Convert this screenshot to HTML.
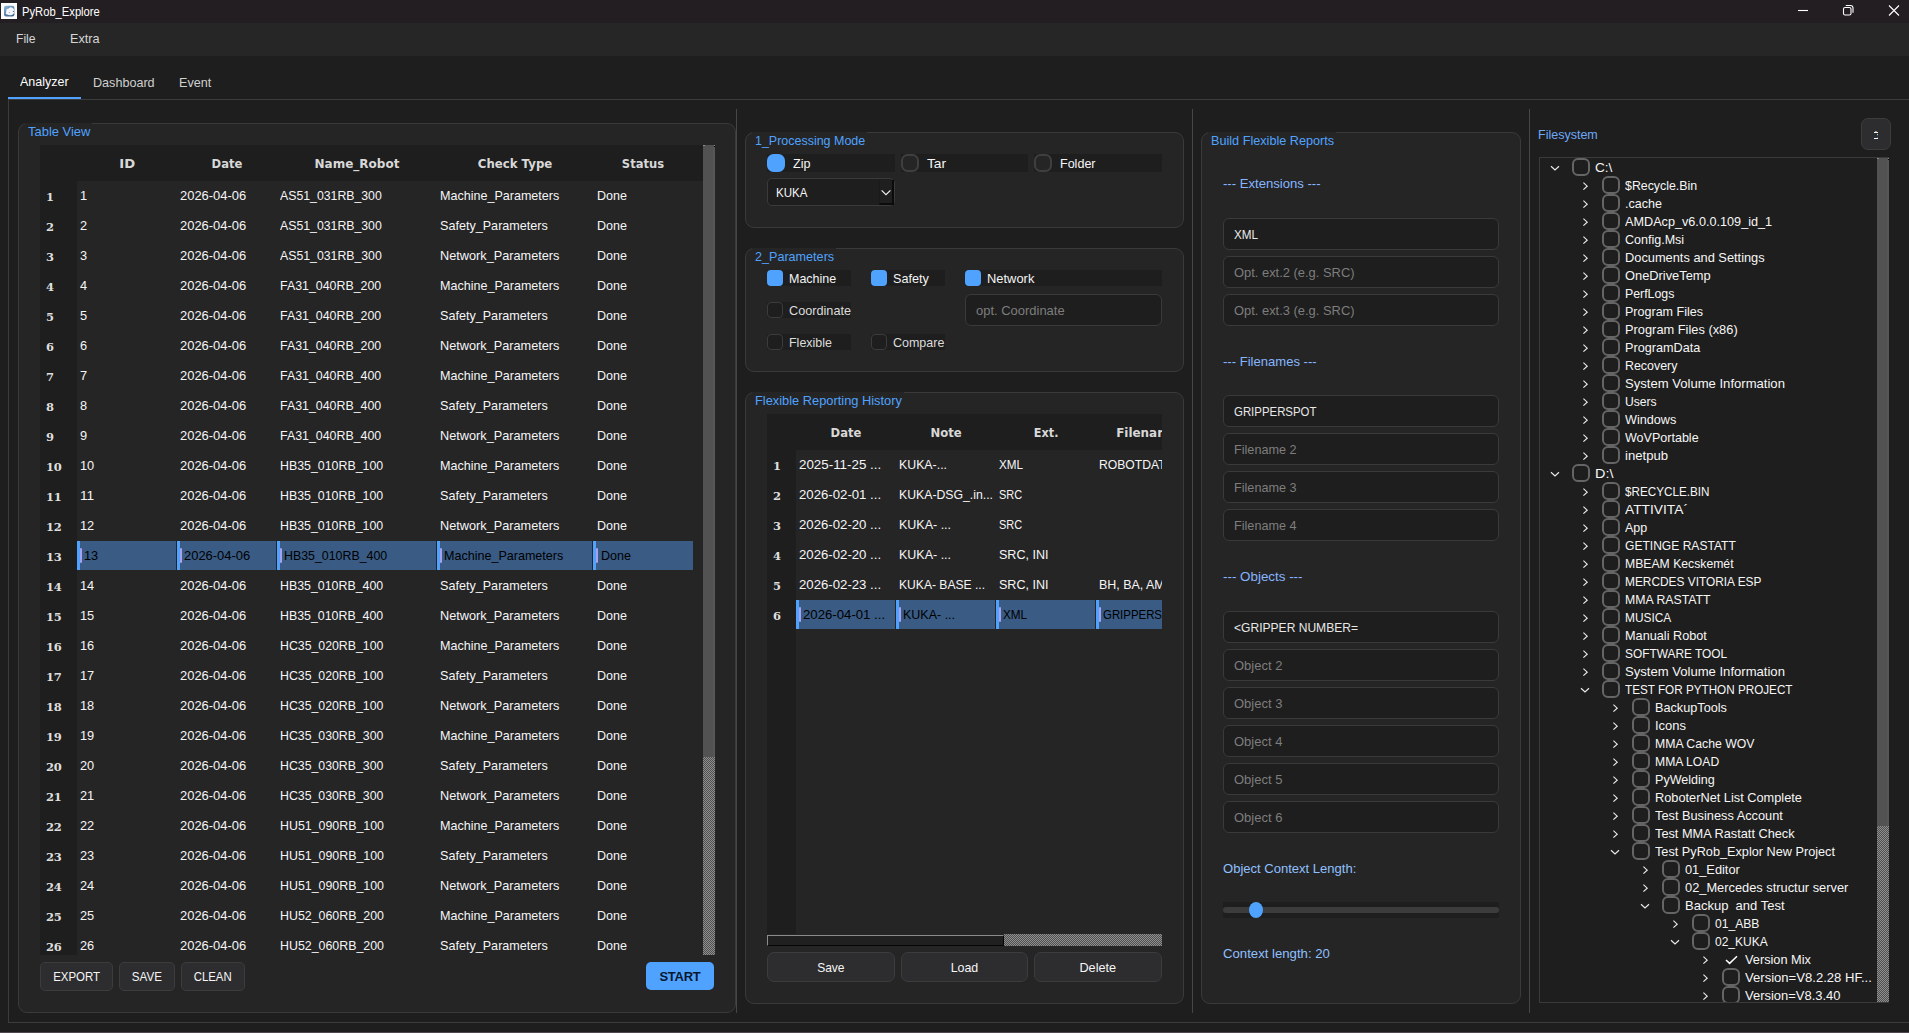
<!DOCTYPE html><html><head><meta charset="utf-8"><title>PyRob_Explore</title><style>
*{box-sizing:border-box;margin:0;padding:0}
html,body{width:1909px;height:1033px;overflow:hidden;background:#1e1e1e;}
body{position:relative;font-family:"Liberation Sans",sans-serif;font-size:13px;color:#f6f6f6}
.a{position:absolute;white-space:pre}
.t{position:absolute;white-space:pre;line-height:18px;height:18px;transform-origin:0 50%}
.cs{display:inline-block;transform-origin:50% 50%;white-space:pre}
.ls{display:inline-block;transform-origin:0 50%;white-space:pre}
.grp{position:absolute;background:#252526;border:1px solid #3a3a3a;border-radius:9px}
.gt{position:absolute;background:#252526;height:15px}
.gtt{color:#4fa3ff}
.hd{position:absolute;white-space:pre;font-family:"DejaVu Sans",sans-serif;font-weight:700;font-size:12px;color:#d8d8d8;text-align:center;line-height:18px;height:18px}
.rn{position:absolute;white-space:pre;font-family:"DejaVu Serif",serif;font-weight:700;font-size:11.5px;color:#dedede;letter-spacing:-.2px;line-height:18px;height:18px}

.sel{position:absolute;background:#395b84;border-left:3px solid #4fa3ff;height:29px}
.sel i{position:absolute;left:0;top:7px;width:2px;height:15px;background:#a8a0f0;border-radius:1px}
.sel .t{color:#000}
.btn{position:absolute;background:#2d2d30;border:1px solid #3c3c3c;border-radius:5px;text-align:center;white-space:pre}
.inp{position:absolute;left:1223px;width:276px;height:32px;background:#1e1e1e;border:1px solid #3a3a3a;border-radius:6px;white-space:pre}
.ph{color:#7d7d7d}
.lbl{position:absolute;background:#1e1e1e;white-space:pre}
.cb{position:absolute;width:16px;height:16px;border-radius:4px}
.cb.on{background:#4fa3ff}
.cb.off{background:#1e1e1e;border:1px solid #3c3c3c}
.rb{position:absolute;width:18px;height:18px;border-radius:6.5px}
.rb.on{background:#4fa3ff}
.rb.off{background:#252526;border:2px solid #3f3f3f}
.tcb{position:absolute;width:18px;height:18px;border:2px solid #656565;border-radius:6px}
.vl{position:absolute;width:1px;background:#464646;top:109px;height:904px}
.chk{background-image:conic-gradient(#8e8e8e 25%,#505050 0 50%,#8e8e8e 0 75%,#505050 0);background-size:2px 2px}
svg{position:absolute;overflow:visible}
</style></head><body>
<div class="a" style="left:0;top:0;width:1909px;height:23px;background:#231e21"></div>
<svg style="left:1px;top:3px" width="16" height="16" viewBox="0 0 16 16"><defs><linearGradient id="ig" x1="0" y1="0" x2="0.6" y2="1"><stop offset="0" stop-color="#8fbbdf"/><stop offset="1" stop-color="#3d6390"/></linearGradient></defs><rect width="16" height="16" fill="#fdfdfe"/><rect x="3" y="2.8" width="10.4" height="10.6" rx="2" fill="url(#ig)"/><circle cx="9.2" cy="8.2" r="4" fill="#f2f5fa"/><path d="M4.6 10.5 L7.8 6.2 L6.2 11.8 Z" fill="#fff"/><circle cx="12.4" cy="8.4" r="0.6" fill="#46648c"/><circle cx="8.4" cy="9.6" r="0.5" fill="#8aa3c2"/><path d="M6.4 5.6 L8.6 4.2" stroke="#4b6a93" stroke-width="0.9"/></svg>
<div class="t" style="left:22px;top:3px;transform:scaleX(0.933);color:#fff;font-size:12px">PyRob_Explore</div>
<svg style="left:1790px;top:0" width="119" height="23" viewBox="0 0 119 23" fill="none" stroke="#fff" stroke-width="1.1"><path d="M8 10.5 H18"/><rect x="53.5" y="7.5" width="7.5" height="7.5" rx="1.6"/><path d="M55.8 5.5 H60.5 a2.5 2.5 0 0 1 2.5 2.5 V12.8"/><path d="M99 5.5 L109 15.5 M109 5.5 L99 15.5"/></svg>
<div class="a" style="left:0;top:23px;width:1909px;height:33px;background:#262626"></div>
<div class="t" style="left:16px;top:30px;transform:scaleX(0.934);color:#d6d6d6">File</div>
<div class="t" style="left:70px;top:30px;transform:scaleX(0.975);color:#d6d6d6">Extra</div>
<div class="t" style="left:20px;top:73px;transform:scaleX(0.961);color:#fff">Analyzer</div>
<div class="t" style="left:93px;top:74px;transform:scaleX(0.969);color:#d0d0d0">Dashboard</div>
<div class="t" style="left:179px;top:74px;transform:scaleX(0.969);color:#d0d0d0">Event</div>
<div class="a" style="left:8px;top:99px;width:1905px;height:924px;border:1px solid #3c3c3c"></div>
<div class="a" style="left:8px;top:96.6px;width:73px;height:2.7px;background:#4fa3ff"></div>
<div class="a" style="left:0;top:1032px;width:1909px;height:1px;background:#4e474d"></div>
<div class="vl" style="left:736px"></div>
<div class="vl" style="left:1192px"></div>
<div class="vl" style="left:1529px"></div>
<div class="grp" style="left:18px;top:123px;width:718px;height:890px"></div>
<div class="gt" style="left:25px;top:123px;width:67px"></div>
<div class="t" style="left:28px;top:123px;transform:scaleX(0.996);color:#4fa3ff">Table View</div>
<div class="a" style="left:40px;top:145px;width:663px;height:810px;background:#252526;overflow:hidden">
<div class="a" style="left:0;top:0;width:663px;height:36px;background:#1e1e1e"></div>
<div class="a" style="left:0;top:0;width:37px;height:810px;background:#1e1e1e"></div>
<div class="hd" style="left:37px;top:10px;width:100px"><span class="cs" style="transform:scaleX(1.1)">ID</span></div>
<div class="hd" style="left:137px;top:10px;width:100px"><span class="cs" style="transform:scaleX(0.964)">Date</span></div>
<div class="hd" style="left:237px;top:10px;width:160px"><span class="cs" style="transform:scaleX(1.0)">Name_Robot</span></div>
<div class="hd" style="left:397px;top:10px;width:156px"><span class="cs" style="transform:scaleX(0.978)">Check Type</span></div>
<div class="hd" style="left:553px;top:10px;width:100px"><span class="cs" style="transform:scaleX(0.961)">Status</span></div>
<div class="rn" style="left:6px;top:43px">1</div>
<div class="t" style="left:40px;top:42px;transform:scaleX(0.982)">1</div>
<div class="t" style="left:140px;top:42px;transform:scaleX(0.996)">2026-04-06</div>
<div class="t" style="left:240px;top:42px;transform:scaleX(0.945)">AS51_031RB_300</div>
<div class="t" style="left:400px;top:42px;transform:scaleX(0.965)">Machine_Parameters</div>
<div class="t" style="left:557px;top:42px;transform:scaleX(0.964)">Done</div>
<div class="rn" style="left:6px;top:73px">2</div>
<div class="t" style="left:40px;top:72px;transform:scaleX(0.982)">2</div>
<div class="t" style="left:140px;top:72px;transform:scaleX(0.996)">2026-04-06</div>
<div class="t" style="left:240px;top:72px;transform:scaleX(0.945)">AS51_031RB_300</div>
<div class="t" style="left:400px;top:72px;transform:scaleX(0.969)">Safety_Parameters</div>
<div class="t" style="left:557px;top:72px;transform:scaleX(0.964)">Done</div>
<div class="rn" style="left:6px;top:103px">3</div>
<div class="t" style="left:40px;top:102px;transform:scaleX(0.982)">3</div>
<div class="t" style="left:140px;top:102px;transform:scaleX(0.996)">2026-04-06</div>
<div class="t" style="left:240px;top:102px;transform:scaleX(0.945)">AS51_031RB_300</div>
<div class="t" style="left:400px;top:102px;transform:scaleX(0.978)">Network_Parameters</div>
<div class="t" style="left:557px;top:102px;transform:scaleX(0.964)">Done</div>
<div class="rn" style="left:6px;top:133px">4</div>
<div class="t" style="left:40px;top:132px;transform:scaleX(0.982)">4</div>
<div class="t" style="left:140px;top:132px;transform:scaleX(0.996)">2026-04-06</div>
<div class="t" style="left:240px;top:132px;transform:scaleX(0.953)">FA31_040RB_200</div>
<div class="t" style="left:400px;top:132px;transform:scaleX(0.965)">Machine_Parameters</div>
<div class="t" style="left:557px;top:132px;transform:scaleX(0.964)">Done</div>
<div class="rn" style="left:6px;top:163px">5</div>
<div class="t" style="left:40px;top:162px;transform:scaleX(0.982)">5</div>
<div class="t" style="left:140px;top:162px;transform:scaleX(0.996)">2026-04-06</div>
<div class="t" style="left:240px;top:162px;transform:scaleX(0.953)">FA31_040RB_200</div>
<div class="t" style="left:400px;top:162px;transform:scaleX(0.969)">Safety_Parameters</div>
<div class="t" style="left:557px;top:162px;transform:scaleX(0.964)">Done</div>
<div class="rn" style="left:6px;top:193px">6</div>
<div class="t" style="left:40px;top:192px;transform:scaleX(0.982)">6</div>
<div class="t" style="left:140px;top:192px;transform:scaleX(0.996)">2026-04-06</div>
<div class="t" style="left:240px;top:192px;transform:scaleX(0.953)">FA31_040RB_200</div>
<div class="t" style="left:400px;top:192px;transform:scaleX(0.978)">Network_Parameters</div>
<div class="t" style="left:557px;top:192px;transform:scaleX(0.964)">Done</div>
<div class="rn" style="left:6px;top:223px">7</div>
<div class="t" style="left:40px;top:222px;transform:scaleX(0.982)">7</div>
<div class="t" style="left:140px;top:222px;transform:scaleX(0.996)">2026-04-06</div>
<div class="t" style="left:240px;top:222px;transform:scaleX(0.953)">FA31_040RB_400</div>
<div class="t" style="left:400px;top:222px;transform:scaleX(0.965)">Machine_Parameters</div>
<div class="t" style="left:557px;top:222px;transform:scaleX(0.964)">Done</div>
<div class="rn" style="left:6px;top:253px">8</div>
<div class="t" style="left:40px;top:252px;transform:scaleX(0.982)">8</div>
<div class="t" style="left:140px;top:252px;transform:scaleX(0.996)">2026-04-06</div>
<div class="t" style="left:240px;top:252px;transform:scaleX(0.953)">FA31_040RB_400</div>
<div class="t" style="left:400px;top:252px;transform:scaleX(0.969)">Safety_Parameters</div>
<div class="t" style="left:557px;top:252px;transform:scaleX(0.964)">Done</div>
<div class="rn" style="left:6px;top:283px">9</div>
<div class="t" style="left:40px;top:282px;transform:scaleX(0.982)">9</div>
<div class="t" style="left:140px;top:282px;transform:scaleX(0.996)">2026-04-06</div>
<div class="t" style="left:240px;top:282px;transform:scaleX(0.953)">FA31_040RB_400</div>
<div class="t" style="left:400px;top:282px;transform:scaleX(0.978)">Network_Parameters</div>
<div class="t" style="left:557px;top:282px;transform:scaleX(0.964)">Done</div>
<div class="rn" style="left:6px;top:313px">10</div>
<div class="t" style="left:40px;top:312px;transform:scaleX(0.982)">10</div>
<div class="t" style="left:140px;top:312px;transform:scaleX(0.996)">2026-04-06</div>
<div class="t" style="left:240px;top:312px;transform:scaleX(0.952)">HB35_010RB_100</div>
<div class="t" style="left:400px;top:312px;transform:scaleX(0.965)">Machine_Parameters</div>
<div class="t" style="left:557px;top:312px;transform:scaleX(0.964)">Done</div>
<div class="rn" style="left:6px;top:343px">11</div>
<div class="t" style="left:40px;top:342px;transform:scaleX(1.052)">11</div>
<div class="t" style="left:140px;top:342px;transform:scaleX(0.996)">2026-04-06</div>
<div class="t" style="left:240px;top:342px;transform:scaleX(0.952)">HB35_010RB_100</div>
<div class="t" style="left:400px;top:342px;transform:scaleX(0.969)">Safety_Parameters</div>
<div class="t" style="left:557px;top:342px;transform:scaleX(0.964)">Done</div>
<div class="rn" style="left:6px;top:373px">12</div>
<div class="t" style="left:40px;top:372px;transform:scaleX(0.982)">12</div>
<div class="t" style="left:140px;top:372px;transform:scaleX(0.996)">2026-04-06</div>
<div class="t" style="left:240px;top:372px;transform:scaleX(0.952)">HB35_010RB_100</div>
<div class="t" style="left:400px;top:372px;transform:scaleX(0.978)">Network_Parameters</div>
<div class="t" style="left:557px;top:372px;transform:scaleX(0.964)">Done</div>
<div class="rn" style="left:6px;top:403px">13</div>
<div class="sel" style="left:37px;top:396px;width:99px"><i></i>
<div class="t" style="left:4px;top:6px;transform:scaleX(0.982)">13</div>
</div>
<div class="sel" style="left:137px;top:396px;width:99px"><i></i>
<div class="t" style="left:4px;top:6px;transform:scaleX(0.996)">2026-04-06</div>
</div>
<div class="sel" style="left:237px;top:396px;width:159px"><i></i>
<div class="t" style="left:4px;top:6px;transform:scaleX(0.952)">HB35_010RB_400</div>
</div>
<div class="sel" style="left:397px;top:396px;width:155px"><i></i>
<div class="t" style="left:4px;top:6px;transform:scaleX(0.965)">Machine_Parameters</div>
</div>
<div class="sel" style="left:553px;top:396px;width:100px"><i></i>
<div class="t" style="left:5px;top:6px;transform:scaleX(0.964)">Done</div>
</div>
<div class="rn" style="left:6px;top:433px">14</div>
<div class="t" style="left:40px;top:432px;transform:scaleX(0.982)">14</div>
<div class="t" style="left:140px;top:432px;transform:scaleX(0.996)">2026-04-06</div>
<div class="t" style="left:240px;top:432px;transform:scaleX(0.952)">HB35_010RB_400</div>
<div class="t" style="left:400px;top:432px;transform:scaleX(0.969)">Safety_Parameters</div>
<div class="t" style="left:557px;top:432px;transform:scaleX(0.964)">Done</div>
<div class="rn" style="left:6px;top:463px">15</div>
<div class="t" style="left:40px;top:462px;transform:scaleX(0.982)">15</div>
<div class="t" style="left:140px;top:462px;transform:scaleX(0.996)">2026-04-06</div>
<div class="t" style="left:240px;top:462px;transform:scaleX(0.952)">HB35_010RB_400</div>
<div class="t" style="left:400px;top:462px;transform:scaleX(0.978)">Network_Parameters</div>
<div class="t" style="left:557px;top:462px;transform:scaleX(0.964)">Done</div>
<div class="rn" style="left:6px;top:493px">16</div>
<div class="t" style="left:40px;top:492px;transform:scaleX(0.982)">16</div>
<div class="t" style="left:140px;top:492px;transform:scaleX(0.996)">2026-04-06</div>
<div class="t" style="left:240px;top:492px;transform:scaleX(0.947)">HC35_020RB_100</div>
<div class="t" style="left:400px;top:492px;transform:scaleX(0.965)">Machine_Parameters</div>
<div class="t" style="left:557px;top:492px;transform:scaleX(0.964)">Done</div>
<div class="rn" style="left:6px;top:523px">17</div>
<div class="t" style="left:40px;top:522px;transform:scaleX(0.982)">17</div>
<div class="t" style="left:140px;top:522px;transform:scaleX(0.996)">2026-04-06</div>
<div class="t" style="left:240px;top:522px;transform:scaleX(0.947)">HC35_020RB_100</div>
<div class="t" style="left:400px;top:522px;transform:scaleX(0.969)">Safety_Parameters</div>
<div class="t" style="left:557px;top:522px;transform:scaleX(0.964)">Done</div>
<div class="rn" style="left:6px;top:553px">18</div>
<div class="t" style="left:40px;top:552px;transform:scaleX(0.982)">18</div>
<div class="t" style="left:140px;top:552px;transform:scaleX(0.996)">2026-04-06</div>
<div class="t" style="left:240px;top:552px;transform:scaleX(0.947)">HC35_020RB_100</div>
<div class="t" style="left:400px;top:552px;transform:scaleX(0.978)">Network_Parameters</div>
<div class="t" style="left:557px;top:552px;transform:scaleX(0.964)">Done</div>
<div class="rn" style="left:6px;top:583px">19</div>
<div class="t" style="left:40px;top:582px;transform:scaleX(0.982)">19</div>
<div class="t" style="left:140px;top:582px;transform:scaleX(0.996)">2026-04-06</div>
<div class="t" style="left:240px;top:582px;transform:scaleX(0.947)">HC35_030RB_300</div>
<div class="t" style="left:400px;top:582px;transform:scaleX(0.965)">Machine_Parameters</div>
<div class="t" style="left:557px;top:582px;transform:scaleX(0.964)">Done</div>
<div class="rn" style="left:6px;top:613px">20</div>
<div class="t" style="left:40px;top:612px;transform:scaleX(0.982)">20</div>
<div class="t" style="left:140px;top:612px;transform:scaleX(0.996)">2026-04-06</div>
<div class="t" style="left:240px;top:612px;transform:scaleX(0.947)">HC35_030RB_300</div>
<div class="t" style="left:400px;top:612px;transform:scaleX(0.969)">Safety_Parameters</div>
<div class="t" style="left:557px;top:612px;transform:scaleX(0.964)">Done</div>
<div class="rn" style="left:6px;top:643px">21</div>
<div class="t" style="left:40px;top:642px;transform:scaleX(0.982)">21</div>
<div class="t" style="left:140px;top:642px;transform:scaleX(0.996)">2026-04-06</div>
<div class="t" style="left:240px;top:642px;transform:scaleX(0.947)">HC35_030RB_300</div>
<div class="t" style="left:400px;top:642px;transform:scaleX(0.978)">Network_Parameters</div>
<div class="t" style="left:557px;top:642px;transform:scaleX(0.964)">Done</div>
<div class="rn" style="left:6px;top:673px">22</div>
<div class="t" style="left:40px;top:672px;transform:scaleX(0.982)">22</div>
<div class="t" style="left:140px;top:672px;transform:scaleX(0.996)">2026-04-06</div>
<div class="t" style="left:240px;top:672px;transform:scaleX(0.953)">HU51_090RB_100</div>
<div class="t" style="left:400px;top:672px;transform:scaleX(0.965)">Machine_Parameters</div>
<div class="t" style="left:557px;top:672px;transform:scaleX(0.964)">Done</div>
<div class="rn" style="left:6px;top:703px">23</div>
<div class="t" style="left:40px;top:702px;transform:scaleX(0.982)">23</div>
<div class="t" style="left:140px;top:702px;transform:scaleX(0.996)">2026-04-06</div>
<div class="t" style="left:240px;top:702px;transform:scaleX(0.953)">HU51_090RB_100</div>
<div class="t" style="left:400px;top:702px;transform:scaleX(0.969)">Safety_Parameters</div>
<div class="t" style="left:557px;top:702px;transform:scaleX(0.964)">Done</div>
<div class="rn" style="left:6px;top:733px">24</div>
<div class="t" style="left:40px;top:732px;transform:scaleX(0.982)">24</div>
<div class="t" style="left:140px;top:732px;transform:scaleX(0.996)">2026-04-06</div>
<div class="t" style="left:240px;top:732px;transform:scaleX(0.953)">HU51_090RB_100</div>
<div class="t" style="left:400px;top:732px;transform:scaleX(0.978)">Network_Parameters</div>
<div class="t" style="left:557px;top:732px;transform:scaleX(0.964)">Done</div>
<div class="rn" style="left:6px;top:763px">25</div>
<div class="t" style="left:40px;top:762px;transform:scaleX(0.982)">25</div>
<div class="t" style="left:140px;top:762px;transform:scaleX(0.996)">2026-04-06</div>
<div class="t" style="left:240px;top:762px;transform:scaleX(0.953)">HU52_060RB_200</div>
<div class="t" style="left:400px;top:762px;transform:scaleX(0.965)">Machine_Parameters</div>
<div class="t" style="left:557px;top:762px;transform:scaleX(0.964)">Done</div>
<div class="rn" style="left:6px;top:793px">26</div>
<div class="t" style="left:40px;top:792px;transform:scaleX(0.982)">26</div>
<div class="t" style="left:140px;top:792px;transform:scaleX(0.996)">2026-04-06</div>
<div class="t" style="left:240px;top:792px;transform:scaleX(0.953)">HU52_060RB_200</div>
<div class="t" style="left:400px;top:792px;transform:scaleX(0.969)">Safety_Parameters</div>
<div class="t" style="left:557px;top:792px;transform:scaleX(0.964)">Done</div>
</div>
<div class="a" style="left:703px;top:145px;width:12px;height:612px;background:#525252"></div>
<div class="a chk" style="left:703px;top:757px;width:12px;height:198px"></div>
<div class="a" style="left:703px;top:145px;width:2px;height:1px;background:#8a8a8a"></div><div class="a" style="left:714px;top:145px;width:1px;height:1px;background:#8a8a8a"></div><div class="a" style="left:714px;top:146px;width:1px;height:1px;background:#050505"></div><div class="a" style="left:713px;top:147px;width:2px;height:610px;background:#575757"></div>
<div class="btn" style="left:40px;top:962px;width:73px;height:29px;line-height:27px"><span class="cs" style="transform:scaleX(0.881)">EXPORT</span></div>
<div class="btn" style="left:119px;top:962px;width:56px;height:29px;line-height:27px"><span class="cs" style="transform:scaleX(0.893)">SAVE</span></div>
<div class="btn" style="left:181px;top:962px;width:64px;height:29px;line-height:27px"><span class="cs" style="transform:scaleX(0.878)">CLEAN</span></div>
<div class="btn" style="left:646px;top:962px;width:68px;height:28px;line-height:29px;background:#4fa3ff;border:none;color:#0b1830;font-weight:700;letter-spacing:-0.25px">START</div>
<div class="grp" style="left:745px;top:132px;width:439px;height:96px"></div>
<div class="gt" style="left:752px;top:132px;width:115px"></div>
<div class="t" style="left:755px;top:132px;transform:scaleX(0.959);color:#4fa3ff">1_Processing Mode</div>
<div class="lbl" style="left:767px;top:154px;width:128px;height:18px"></div>
<div class="rb on" style="left:767px;top:154px"></div>
<div class="t" style="left:793px;top:155px;transform:scaleX(0.965)">Zip</div>
<div class="lbl" style="left:901px;top:154px;width:127px;height:18px"></div>
<div class="rb off" style="left:901px;top:154px"></div>
<div class="t" style="left:927px;top:155px;transform:scaleX(1.057)">Tar</div>
<div class="lbl" style="left:1034px;top:154px;width:128px;height:18px"></div>
<div class="rb off" style="left:1034px;top:154px"></div>
<div class="t" style="left:1060px;top:155px;transform:scaleX(0.964)">Folder</div>
<div class="a" style="left:767px;top:178px;width:128px;height:28px;background:#1e1e1e;border:1px solid #3a3a3a;border-radius:5px"></div>
<div class="t" style="left:776px;top:184px;transform:scaleX(0.889)">KUKA</div>
<div class="a" style="left:879px;top:180px;width:15px;height:25px;background:#1f1f1f;border-right:2px solid #0b0b0b;border-bottom:2px solid #0b0b0b;border-left:1px solid #1a1a1a"></div>
<svg style="left:881px;top:189px" width="10" height="7" viewBox="0 0 10 7" fill="none" stroke="#f4f4f4" stroke-width="1.15"><path d="M0.6 1.3 L5 5.6 L9.4 1.3"/></svg>
<div class="grp" style="left:745px;top:248px;width:439px;height:124px"></div>
<div class="gt" style="left:752px;top:248px;width:84px"></div>
<div class="t" style="left:755px;top:248px;transform:scaleX(0.969);color:#4fa3ff">2_Parameters</div>
<div class="lbl" style="left:767px;top:270px;width:84px;height:16px"></div>
<div class="cb on" style="left:767px;top:270px"></div>
<div class="t" style="left:789px;top:270px;transform:scaleX(0.96);color:#f4f4f4">Machine</div>
<div class="lbl" style="left:871px;top:270px;width:74px;height:16px"></div>
<div class="cb on" style="left:871px;top:270px"></div>
<div class="t" style="left:893px;top:270px;transform:scaleX(0.972);color:#f4f4f4">Safety</div>
<div class="lbl" style="left:965px;top:270px;width:197px;height:16px"></div>
<div class="cb on" style="left:965px;top:270px"></div>
<div class="t" style="left:987px;top:270px;transform:scaleX(0.993);color:#f4f4f4">Network</div>
<div class="lbl" style="left:767px;top:302px;width:84px;height:16px"></div>
<div class="cb off" style="left:767px;top:302px"></div>
<div class="t" style="left:789px;top:302px;transform:scaleX(0.975);color:#dcdcdc">Coordinate</div>
<div class="lbl" style="left:767px;top:334px;width:84px;height:16px"></div>
<div class="cb off" style="left:767px;top:334px"></div>
<div class="t" style="left:789px;top:334px;transform:scaleX(0.96);color:#dcdcdc">Flexible</div>
<div class="lbl" style="left:871px;top:334px;width:74px;height:16px"></div>
<div class="cb off" style="left:871px;top:334px"></div>
<div class="t" style="left:893px;top:334px;transform:scaleX(0.96);color:#dcdcdc">Compare</div>
<div class="inp" style="left:965px;top:294px;width:197px"></div>
<div class="t" style="left:976px;top:302px;transform:scaleX(0.997);color:#7d7d7d">opt. Coordinate</div>
<div class="grp" style="left:745px;top:392px;width:439px;height:612px"></div>
<div class="gt" style="left:752px;top:392px;width:152px"></div>
<div class="t" style="left:755px;top:392px;transform:scaleX(0.987);color:#4fa3ff">Flexible Reporting History</div>
<div class="a" style="left:767px;top:414px;width:395px;height:520px;background:#252526;overflow:hidden">
<div class="a" style="left:0;top:0;width:395px;height:36px;background:#1e1e1e"></div>
<div class="a" style="left:0;top:0;width:29px;height:520px;background:#1e1e1e"></div>
<div class="hd" style="left:29px;top:10px;width:100px"><span class="cs" style="transform:scaleX(0.964)">Date</span></div>
<div class="hd" style="left:129px;top:10px;width:100px"><span class="cs" style="transform:scaleX(0.97)">Note</span></div>
<div class="hd" style="left:229px;top:10px;width:100px"><span class="cs" style="transform:scaleX(0.938)">Ext.</span></div>
<div class="hd" style="left:329px;top:10px;width:109px"><span class="cs" style="transform:scaleX(0.996)">Filenames</span></div>
<div class="rn" style="left:6px;top:43px">1</div>
<div class="t" style="left:32px;top:42px;transform:scaleX(1.027)">2025-11-25 ...</div>
<div class="t" style="left:132px;top:42px;transform:scaleX(0.949)">KUKA-...</div>
<div class="t" style="left:232px;top:42px;transform:scaleX(0.899)">XML</div>
<div class="t" style="left:332px;top:42px;transform:scaleX(0.934)">ROBOTDATA</div>
<div class="rn" style="left:6px;top:73px">2</div>
<div class="t" style="left:32px;top:72px;transform:scaleX(1.014)">2026-02-01 ...</div>
<div class="t" style="left:132px;top:72px;transform:scaleX(0.943)">KUKA-DSG_.in...</div>
<div class="t" style="left:232px;top:72px;transform:scaleX(0.843)">SRC</div>
<div class="rn" style="left:6px;top:103px">3</div>
<div class="t" style="left:32px;top:102px;transform:scaleX(1.014)">2026-02-20 ...</div>
<div class="t" style="left:132px;top:102px;transform:scaleX(0.961)">KUKA- ...</div>
<div class="t" style="left:232px;top:102px;transform:scaleX(0.843)">SRC</div>
<div class="rn" style="left:6px;top:133px">4</div>
<div class="t" style="left:32px;top:132px;transform:scaleX(1.014)">2026-02-20 ...</div>
<div class="t" style="left:132px;top:132px;transform:scaleX(0.961)">KUKA- ...</div>
<div class="t" style="left:232px;top:132px;transform:scaleX(0.965)">SRC, INI</div>
<div class="rn" style="left:6px;top:163px">5</div>
<div class="t" style="left:32px;top:162px;transform:scaleX(1.014)">2026-02-23 ...</div>
<div class="t" style="left:132px;top:162px;transform:scaleX(0.931)">KUKA- BASE ...</div>
<div class="t" style="left:232px;top:162px;transform:scaleX(0.965)">SRC, INI</div>
<div class="t" style="left:332px;top:162px;transform:scaleX(0.958)">BH, BA, AM</div>
<div class="rn" style="left:6px;top:193px">6</div>
<div class="sel" style="left:29px;top:186px;width:99px"><i></i>
<div class="t" style="left:4px;top:6px;transform:scaleX(1.014)">2026-04-01 ...</div>
</div>
<div class="sel" style="left:129px;top:186px;width:99px"><i></i>
<div class="t" style="left:4px;top:6px;transform:scaleX(0.961)">KUKA- ...</div>
</div>
<div class="sel" style="left:229px;top:186px;width:99px"><i></i>
<div class="t" style="left:4px;top:6px;transform:scaleX(0.899)">XML</div>
</div>
<div class="sel" style="left:329px;top:186px;width:108px"><i></i>
<div class="t" style="left:4px;top:6px;transform:scaleX(0.878)">GRIPPERSPOT</div>
</div>
</div>
<div class="a chk" style="left:767px;top:934px;width:395px;height:12px"></div>
<div class="a" style="left:767px;top:934px;width:237px;height:1px;background:#252526"></div>
<div class="a" style="left:767px;top:935px;width:237px;height:11px;background:#202020;border-top:1px solid #8a8a8a;border-left:1px solid #8a8a8a;border-bottom:1px solid #050505;border-right:1px solid #050505"></div>
<div class="btn" style="left:767px;top:952px;width:128px;height:30px;line-height:29px;border-radius:7px"><span class="cs" style="transform:scaleX(0.924)">Save</span></div>
<div class="btn" style="left:901px;top:952px;width:127px;height:30px;line-height:29px;border-radius:7px"><span class="cs" style="transform:scaleX(0.953)">Load</span></div>
<div class="btn" style="left:1034px;top:952px;width:128px;height:30px;line-height:29px;border-radius:7px"><span class="cs" style="transform:scaleX(0.975)">Delete</span></div>
<div class="grp" style="left:1201px;top:132px;width:320px;height:872px"></div>
<div class="gt" style="left:1208px;top:132px;width:128px"></div>
<div class="t" style="left:1211px;top:132px;transform:scaleX(0.974);color:#4fa3ff">Build Flexible Reports</div>
<div class="t" style="left:1223px;top:175px;transform:scaleX(1.008);color:#86b6ff">--- Extensions ---</div>
<div class="t" style="left:1223px;top:353px;transform:scaleX(1.005);color:#86b6ff">--- Filenames ---</div>
<div class="t" style="left:1223px;top:568px;transform:scaleX(1.029);color:#86b6ff">--- Objects ---</div>
<div class="inp" style="top:218px"></div>
<div class="t" style="left:1234px;top:226px;transform:scaleX(0.899);color:#e8e8e8">XML</div>
<div class="inp" style="top:256px"></div>
<div class="t" style="left:1234px;top:264px;transform:scaleX(0.993);color:#7d7d7d">Opt. ext.2 (e.g. SRC)</div>
<div class="inp" style="top:294px"></div>
<div class="t" style="left:1234px;top:302px;transform:scaleX(0.993);color:#7d7d7d">Opt. ext.3 (e.g. SRC)</div>
<div class="inp" style="top:395px"></div>
<div class="t" style="left:1234px;top:403px;transform:scaleX(0.878);color:#e8e8e8">GRIPPERSPOT</div>
<div class="inp" style="top:433px"></div>
<div class="t" style="left:1234px;top:441px;transform:scaleX(0.973);color:#7d7d7d">Filename 2</div>
<div class="inp" style="top:471px"></div>
<div class="t" style="left:1234px;top:479px;transform:scaleX(0.973);color:#7d7d7d">Filename 3</div>
<div class="inp" style="top:509px"></div>
<div class="t" style="left:1234px;top:517px;transform:scaleX(0.973);color:#7d7d7d">Filename 4</div>
<div class="inp" style="top:611px"></div>
<div class="t" style="left:1234px;top:619px;transform:scaleX(0.928);color:#e8e8e8">&lt;GRIPPER NUMBER=</div>
<div class="inp" style="top:649px"></div>
<div class="t" style="left:1234px;top:657px;transform:scaleX(1.0);color:#7d7d7d">Object 2</div>
<div class="inp" style="top:687px"></div>
<div class="t" style="left:1234px;top:695px;transform:scaleX(1.0);color:#7d7d7d">Object 3</div>
<div class="inp" style="top:725px"></div>
<div class="t" style="left:1234px;top:733px;transform:scaleX(1.0);color:#7d7d7d">Object 4</div>
<div class="inp" style="top:763px"></div>
<div class="t" style="left:1234px;top:771px;transform:scaleX(1.0);color:#7d7d7d">Object 5</div>
<div class="inp" style="top:801px"></div>
<div class="t" style="left:1234px;top:809px;transform:scaleX(1.0);color:#7d7d7d">Object 6</div>
<div class="t" style="left:1223px;top:860px;transform:scaleX(1.003);color:#8fc0ff">Object Context Length:</div>
<div class="a" style="left:1223px;top:902px;width:276px;height:16px;background:#1e1e1e"></div>
<div class="a" style="left:1223px;top:907px;width:276px;height:6px;background:#3c3c3c;border-radius:3px"></div>
<div class="a" style="left:1249px;top:902px;width:14px;height:16px;background:#4fa3ff;border-radius:50%"></div>
<div class="t" style="left:1223px;top:945px;transform:scaleX(1.013);color:#8fc0ff">Context length: 20</div>
<div class="t" style="left:1538px;top:126px;transform:scaleX(0.962);color:#6ea8f7">Filesystem</div>
<div class="a" style="left:1861px;top:118px;width:30px;height:32px;background:#2d2d30;border:1px solid #3c3c3c;border-radius:7px"></div>
<svg style="left:1873px;top:131px" width="6" height="9" viewBox="0 0 6 9"><rect x="2" y="0" width="1" height="1" fill="#6fb0e8"/><rect x="3" y="0" width="1" height="1" fill="#c07a2a"/><rect x="1" y="1" width="4" height="1" fill="#f4f4f4"/><rect x="4" y="3" width="1" height="1" fill="#a8d890"/><rect x="4" y="4" width="1" height="1" fill="#2a55b0"/><rect x="4" y="6" width="1" height="1" fill="#2a70c8"/><rect x="1" y="7" width="4" height="1" fill="#fafafa"/></svg>
<div class="a" style="left:1539px;top:157px;width:350px;height:846px;border:1px solid #3a3a3a;border-right:none;overflow:hidden">
<svg style="left:10px;top:7px" width="10" height="7" viewBox="0 0 10 7" fill="none" stroke="#ececec" stroke-width="1.15"><path d="M1 1.3 L5 4.9 L9 1.3"/></svg>
<div class="tcb" style="left:32px;top:0px"></div>
<div class="t" style="left:55px;top:1px;transform:scaleX(1.046)">C:\</div>
<svg style="left:42px;top:23px" width="7" height="10" viewBox="0 0 7 10" fill="none" stroke="#ececec" stroke-width="1.15"><path d="M1.4 1.7 L5.2 5.2 L1.4 8.7"/></svg>
<div class="tcb" style="left:62px;top:18px"></div>
<div class="t" style="left:85px;top:19px;transform:scaleX(0.951)">$Recycle.Bin</div>
<svg style="left:42px;top:41px" width="7" height="10" viewBox="0 0 7 10" fill="none" stroke="#ececec" stroke-width="1.15"><path d="M1.4 1.7 L5.2 5.2 L1.4 8.7"/></svg>
<div class="tcb" style="left:62px;top:36px"></div>
<div class="t" style="left:85px;top:37px;transform:scaleX(0.963)">.cache</div>
<svg style="left:42px;top:59px" width="7" height="10" viewBox="0 0 7 10" fill="none" stroke="#ececec" stroke-width="1.15"><path d="M1.4 1.7 L5.2 5.2 L1.4 8.7"/></svg>
<div class="tcb" style="left:62px;top:54px"></div>
<div class="t" style="left:85px;top:55px;transform:scaleX(0.974)">AMDAcp_v6.0.0.109_id_1</div>
<svg style="left:42px;top:77px" width="7" height="10" viewBox="0 0 7 10" fill="none" stroke="#ececec" stroke-width="1.15"><path d="M1.4 1.7 L5.2 5.2 L1.4 8.7"/></svg>
<div class="tcb" style="left:62px;top:72px"></div>
<div class="t" style="left:85px;top:73px;transform:scaleX(0.963)">Config.Msi</div>
<svg style="left:42px;top:95px" width="7" height="10" viewBox="0 0 7 10" fill="none" stroke="#ececec" stroke-width="1.15"><path d="M1.4 1.7 L5.2 5.2 L1.4 8.7"/></svg>
<div class="tcb" style="left:62px;top:90px"></div>
<div class="t" style="left:85px;top:91px;transform:scaleX(0.986)">Documents and Settings</div>
<svg style="left:42px;top:113px" width="7" height="10" viewBox="0 0 7 10" fill="none" stroke="#ececec" stroke-width="1.15"><path d="M1.4 1.7 L5.2 5.2 L1.4 8.7"/></svg>
<div class="tcb" style="left:62px;top:108px"></div>
<div class="t" style="left:85px;top:109px;transform:scaleX(0.988)">OneDriveTemp</div>
<svg style="left:42px;top:131px" width="7" height="10" viewBox="0 0 7 10" fill="none" stroke="#ececec" stroke-width="1.15"><path d="M1.4 1.7 L5.2 5.2 L1.4 8.7"/></svg>
<div class="tcb" style="left:62px;top:126px"></div>
<div class="t" style="left:85px;top:127px;transform:scaleX(0.948)">PerfLogs</div>
<svg style="left:42px;top:149px" width="7" height="10" viewBox="0 0 7 10" fill="none" stroke="#ececec" stroke-width="1.15"><path d="M1.4 1.7 L5.2 5.2 L1.4 8.7"/></svg>
<div class="tcb" style="left:62px;top:144px"></div>
<div class="t" style="left:85px;top:145px;transform:scaleX(0.964)">Program Files</div>
<svg style="left:42px;top:167px" width="7" height="10" viewBox="0 0 7 10" fill="none" stroke="#ececec" stroke-width="1.15"><path d="M1.4 1.7 L5.2 5.2 L1.4 8.7"/></svg>
<div class="tcb" style="left:62px;top:162px"></div>
<div class="t" style="left:85px;top:163px;transform:scaleX(0.987)">Program Files (x86)</div>
<svg style="left:42px;top:185px" width="7" height="10" viewBox="0 0 7 10" fill="none" stroke="#ececec" stroke-width="1.15"><path d="M1.4 1.7 L5.2 5.2 L1.4 8.7"/></svg>
<div class="tcb" style="left:62px;top:180px"></div>
<div class="t" style="left:85px;top:181px;transform:scaleX(0.974)">ProgramData</div>
<svg style="left:42px;top:203px" width="7" height="10" viewBox="0 0 7 10" fill="none" stroke="#ececec" stroke-width="1.15"><path d="M1.4 1.7 L5.2 5.2 L1.4 8.7"/></svg>
<div class="tcb" style="left:62px;top:198px"></div>
<div class="t" style="left:85px;top:199px;transform:scaleX(0.955)">Recovery</div>
<svg style="left:42px;top:221px" width="7" height="10" viewBox="0 0 7 10" fill="none" stroke="#ececec" stroke-width="1.15"><path d="M1.4 1.7 L5.2 5.2 L1.4 8.7"/></svg>
<div class="tcb" style="left:62px;top:216px"></div>
<div class="t" style="left:85px;top:217px;transform:scaleX(1.006)">System Volume Information</div>
<svg style="left:42px;top:239px" width="7" height="10" viewBox="0 0 7 10" fill="none" stroke="#ececec" stroke-width="1.15"><path d="M1.4 1.7 L5.2 5.2 L1.4 8.7"/></svg>
<div class="tcb" style="left:62px;top:234px"></div>
<div class="t" style="left:85px;top:235px;transform:scaleX(0.933)">Users</div>
<svg style="left:42px;top:257px" width="7" height="10" viewBox="0 0 7 10" fill="none" stroke="#ececec" stroke-width="1.15"><path d="M1.4 1.7 L5.2 5.2 L1.4 8.7"/></svg>
<div class="tcb" style="left:62px;top:252px"></div>
<div class="t" style="left:85px;top:253px;transform:scaleX(0.973)">Windows</div>
<svg style="left:42px;top:275px" width="7" height="10" viewBox="0 0 7 10" fill="none" stroke="#ececec" stroke-width="1.15"><path d="M1.4 1.7 L5.2 5.2 L1.4 8.7"/></svg>
<div class="tcb" style="left:62px;top:270px"></div>
<div class="t" style="left:85px;top:271px;transform:scaleX(0.964)">WoVPortable</div>
<svg style="left:42px;top:293px" width="7" height="10" viewBox="0 0 7 10" fill="none" stroke="#ececec" stroke-width="1.15"><path d="M1.4 1.7 L5.2 5.2 L1.4 8.7"/></svg>
<div class="tcb" style="left:62px;top:288px"></div>
<div class="t" style="left:85px;top:289px;transform:scaleX(1.009)">inetpub</div>
<svg style="left:10px;top:313px" width="10" height="7" viewBox="0 0 10 7" fill="none" stroke="#ececec" stroke-width="1.15"><path d="M1 1.3 L5 4.9 L9 1.3"/></svg>
<div class="tcb" style="left:32px;top:306px"></div>
<div class="t" style="left:55px;top:307px;transform:scaleX(1.107)">D:\</div>
<svg style="left:42px;top:329px" width="7" height="10" viewBox="0 0 7 10" fill="none" stroke="#ececec" stroke-width="1.15"><path d="M1.4 1.7 L5.2 5.2 L1.4 8.7"/></svg>
<div class="tcb" style="left:62px;top:324px"></div>
<div class="t" style="left:85px;top:325px;transform:scaleX(0.899)">$RECYCLE.BIN</div>
<svg style="left:42px;top:347px" width="7" height="10" viewBox="0 0 7 10" fill="none" stroke="#ececec" stroke-width="1.15"><path d="M1.4 1.7 L5.2 5.2 L1.4 8.7"/></svg>
<div class="tcb" style="left:62px;top:342px"></div>
<div class="t" style="left:85px;top:343px;transform:scaleX(1.059)">ATTIVITA´</div>
<svg style="left:42px;top:365px" width="7" height="10" viewBox="0 0 7 10" fill="none" stroke="#ececec" stroke-width="1.15"><path d="M1.4 1.7 L5.2 5.2 L1.4 8.7"/></svg>
<div class="tcb" style="left:62px;top:360px"></div>
<div class="t" style="left:85px;top:361px;transform:scaleX(0.959)">App</div>
<svg style="left:42px;top:383px" width="7" height="10" viewBox="0 0 7 10" fill="none" stroke="#ececec" stroke-width="1.15"><path d="M1.4 1.7 L5.2 5.2 L1.4 8.7"/></svg>
<div class="tcb" style="left:62px;top:378px"></div>
<div class="t" style="left:85px;top:379px;transform:scaleX(0.928)">GETINGE RASTATT</div>
<svg style="left:42px;top:401px" width="7" height="10" viewBox="0 0 7 10" fill="none" stroke="#ececec" stroke-width="1.15"><path d="M1.4 1.7 L5.2 5.2 L1.4 8.7"/></svg>
<div class="tcb" style="left:62px;top:396px"></div>
<div class="t" style="left:85px;top:397px;transform:scaleX(0.939)">MBEAM Kecskemét</div>
<svg style="left:42px;top:419px" width="7" height="10" viewBox="0 0 7 10" fill="none" stroke="#ececec" stroke-width="1.15"><path d="M1.4 1.7 L5.2 5.2 L1.4 8.7"/></svg>
<div class="tcb" style="left:62px;top:414px"></div>
<div class="t" style="left:85px;top:415px;transform:scaleX(0.914)">MERCDES VITORIA ESP</div>
<svg style="left:42px;top:437px" width="7" height="10" viewBox="0 0 7 10" fill="none" stroke="#ececec" stroke-width="1.15"><path d="M1.4 1.7 L5.2 5.2 L1.4 8.7"/></svg>
<div class="tcb" style="left:62px;top:432px"></div>
<div class="t" style="left:85px;top:433px;transform:scaleX(0.945)">MMA RASTATT</div>
<svg style="left:42px;top:455px" width="7" height="10" viewBox="0 0 7 10" fill="none" stroke="#ececec" stroke-width="1.15"><path d="M1.4 1.7 L5.2 5.2 L1.4 8.7"/></svg>
<div class="tcb" style="left:62px;top:450px"></div>
<div class="t" style="left:85px;top:451px;transform:scaleX(0.915)">MUSICA</div>
<svg style="left:42px;top:473px" width="7" height="10" viewBox="0 0 7 10" fill="none" stroke="#ececec" stroke-width="1.15"><path d="M1.4 1.7 L5.2 5.2 L1.4 8.7"/></svg>
<div class="tcb" style="left:62px;top:468px"></div>
<div class="t" style="left:85px;top:469px;transform:scaleX(0.977)">Manuali Robot</div>
<svg style="left:42px;top:491px" width="7" height="10" viewBox="0 0 7 10" fill="none" stroke="#ececec" stroke-width="1.15"><path d="M1.4 1.7 L5.2 5.2 L1.4 8.7"/></svg>
<div class="tcb" style="left:62px;top:486px"></div>
<div class="t" style="left:85px;top:487px;transform:scaleX(0.915)">SOFTWARE TOOL</div>
<svg style="left:42px;top:509px" width="7" height="10" viewBox="0 0 7 10" fill="none" stroke="#ececec" stroke-width="1.15"><path d="M1.4 1.7 L5.2 5.2 L1.4 8.7"/></svg>
<div class="tcb" style="left:62px;top:504px"></div>
<div class="t" style="left:85px;top:505px;transform:scaleX(1.006)">System Volume Information</div>
<svg style="left:40px;top:529px" width="10" height="7" viewBox="0 0 10 7" fill="none" stroke="#ececec" stroke-width="1.15"><path d="M1 1.3 L5 4.9 L9 1.3"/></svg>
<div class="tcb" style="left:62px;top:522px"></div>
<div class="t" style="left:85px;top:523px;transform:scaleX(0.9)">TEST FOR PYTHON PROJECT</div>
<svg style="left:72px;top:545px" width="7" height="10" viewBox="0 0 7 10" fill="none" stroke="#ececec" stroke-width="1.15"><path d="M1.4 1.7 L5.2 5.2 L1.4 8.7"/></svg>
<div class="tcb" style="left:92px;top:540px"></div>
<div class="t" style="left:115px;top:541px;transform:scaleX(0.976)">BackupTools</div>
<svg style="left:72px;top:563px" width="7" height="10" viewBox="0 0 7 10" fill="none" stroke="#ececec" stroke-width="1.15"><path d="M1.4 1.7 L5.2 5.2 L1.4 8.7"/></svg>
<div class="tcb" style="left:92px;top:558px"></div>
<div class="t" style="left:115px;top:559px;transform:scaleX(0.997)">Icons</div>
<svg style="left:72px;top:581px" width="7" height="10" viewBox="0 0 7 10" fill="none" stroke="#ececec" stroke-width="1.15"><path d="M1.4 1.7 L5.2 5.2 L1.4 8.7"/></svg>
<div class="tcb" style="left:92px;top:576px"></div>
<div class="t" style="left:115px;top:577px;transform:scaleX(0.943)">MMA Cache WOV</div>
<svg style="left:72px;top:599px" width="7" height="10" viewBox="0 0 7 10" fill="none" stroke="#ececec" stroke-width="1.15"><path d="M1.4 1.7 L5.2 5.2 L1.4 8.7"/></svg>
<div class="tcb" style="left:92px;top:594px"></div>
<div class="t" style="left:115px;top:595px;transform:scaleX(0.935)">MMA LOAD</div>
<svg style="left:72px;top:617px" width="7" height="10" viewBox="0 0 7 10" fill="none" stroke="#ececec" stroke-width="1.15"><path d="M1.4 1.7 L5.2 5.2 L1.4 8.7"/></svg>
<div class="tcb" style="left:92px;top:612px"></div>
<div class="t" style="left:115px;top:613px;transform:scaleX(0.966)">PyWelding</div>
<svg style="left:72px;top:635px" width="7" height="10" viewBox="0 0 7 10" fill="none" stroke="#ececec" stroke-width="1.15"><path d="M1.4 1.7 L5.2 5.2 L1.4 8.7"/></svg>
<div class="tcb" style="left:92px;top:630px"></div>
<div class="t" style="left:115px;top:631px;transform:scaleX(0.982)">RoboterNet List Complete</div>
<svg style="left:72px;top:653px" width="7" height="10" viewBox="0 0 7 10" fill="none" stroke="#ececec" stroke-width="1.15"><path d="M1.4 1.7 L5.2 5.2 L1.4 8.7"/></svg>
<div class="tcb" style="left:92px;top:648px"></div>
<div class="t" style="left:115px;top:649px;transform:scaleX(0.983)">Test Business Account</div>
<svg style="left:72px;top:671px" width="7" height="10" viewBox="0 0 7 10" fill="none" stroke="#ececec" stroke-width="1.15"><path d="M1.4 1.7 L5.2 5.2 L1.4 8.7"/></svg>
<div class="tcb" style="left:92px;top:666px"></div>
<div class="t" style="left:115px;top:667px;transform:scaleX(0.981)">Test MMA Rastatt Check</div>
<svg style="left:70px;top:691px" width="10" height="7" viewBox="0 0 10 7" fill="none" stroke="#ececec" stroke-width="1.15"><path d="M1 1.3 L5 4.9 L9 1.3"/></svg>
<div class="tcb" style="left:92px;top:684px"></div>
<div class="t" style="left:115px;top:685px;transform:scaleX(0.977)">Test PyRob_Explor New Project</div>
<svg style="left:102px;top:707px" width="7" height="10" viewBox="0 0 7 10" fill="none" stroke="#ececec" stroke-width="1.15"><path d="M1.4 1.7 L5.2 5.2 L1.4 8.7"/></svg>
<div class="tcb" style="left:122px;top:702px"></div>
<div class="t" style="left:145px;top:703px;transform:scaleX(0.985)">01_Editor</div>
<svg style="left:102px;top:725px" width="7" height="10" viewBox="0 0 7 10" fill="none" stroke="#ececec" stroke-width="1.15"><path d="M1.4 1.7 L5.2 5.2 L1.4 8.7"/></svg>
<div class="tcb" style="left:122px;top:720px"></div>
<div class="t" style="left:145px;top:721px;transform:scaleX(0.987)">02_Mercedes structur server</div>
<svg style="left:100px;top:745px" width="10" height="7" viewBox="0 0 10 7" fill="none" stroke="#ececec" stroke-width="1.15"><path d="M1 1.3 L5 4.9 L9 1.3"/></svg>
<div class="tcb" style="left:122px;top:738px"></div>
<div class="t" style="left:145px;top:739px;transform:scaleX(1.0)">Backup  and Test</div>
<svg style="left:132px;top:761px" width="7" height="10" viewBox="0 0 7 10" fill="none" stroke="#ececec" stroke-width="1.15"><path d="M1.4 1.7 L5.2 5.2 L1.4 8.7"/></svg>
<div class="tcb" style="left:152px;top:756px"></div>
<div class="t" style="left:175px;top:757px;transform:scaleX(0.931)">01_ABB</div>
<svg style="left:130px;top:781px" width="10" height="7" viewBox="0 0 10 7" fill="none" stroke="#ececec" stroke-width="1.15"><path d="M1 1.3 L5 4.9 L9 1.3"/></svg>
<div class="tcb" style="left:152px;top:774px"></div>
<div class="t" style="left:175px;top:775px;transform:scaleX(0.924)">02_KUKA</div>
<svg style="left:162px;top:797px" width="7" height="10" viewBox="0 0 7 10" fill="none" stroke="#ececec" stroke-width="1.15"><path d="M1.4 1.7 L5.2 5.2 L1.4 8.7"/></svg>
<svg style="left:185px;top:797px" width="13" height="10" viewBox="0 0 13 10" fill="none" stroke="#fff" stroke-width="1.5"><path d="M1 5 L4.6 8.4 L12 1.2"/></svg>
<div class="t" style="left:205px;top:793px;transform:scaleX(0.981)">Version Mix</div>
<svg style="left:162px;top:815px" width="7" height="10" viewBox="0 0 7 10" fill="none" stroke="#ececec" stroke-width="1.15"><path d="M1.4 1.7 L5.2 5.2 L1.4 8.7"/></svg>
<div class="tcb" style="left:182px;top:810px"></div>
<div class="t" style="left:205px;top:811px;transform:scaleX(1.006)">Version=V8.2.28 HF...</div>
<svg style="left:162px;top:833px" width="7" height="10" viewBox="0 0 7 10" fill="none" stroke="#ececec" stroke-width="1.15"><path d="M1.4 1.7 L5.2 5.2 L1.4 8.7"/></svg>
<div class="tcb" style="left:182px;top:828px"></div>
<div class="t" style="left:205px;top:829px;transform:scaleX(0.997)">Version=V8.3.40</div>
<div class="a" style="left:337px;top:0;width:12px;height:668px;background:#525252"></div>
<div class="a chk" style="left:337px;top:668px;width:12px;height:176px"></div>
<div class="a" style="left:337px;top:0;width:2px;height:1px;background:#8a8a8a"></div><div class="a" style="left:348px;top:0;width:1px;height:1px;background:#8a8a8a"></div><div class="a" style="left:348px;top:1px;width:1px;height:1px;background:#050505"></div><div class="a" style="left:347px;top:2px;width:2px;height:666px;background:#575757"></div>
</div>
</body></html>
